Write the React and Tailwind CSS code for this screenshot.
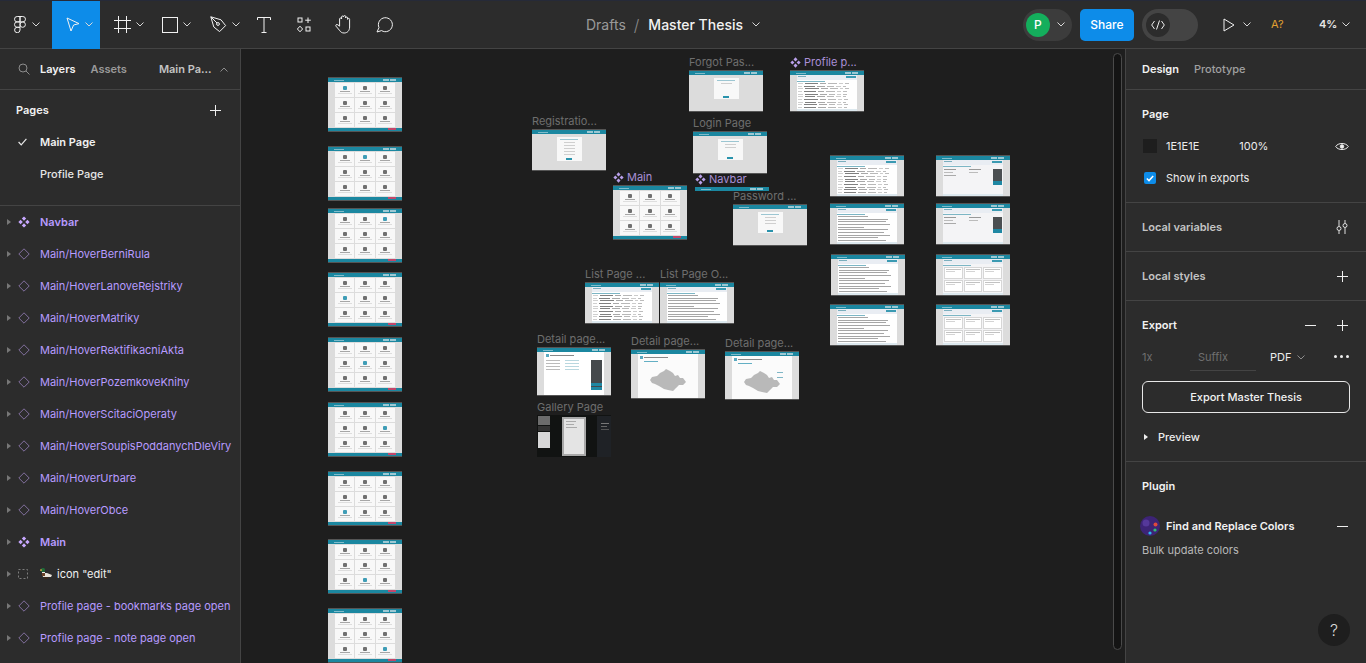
import React from 'react';

const font = { fontFamily: 'Inter, "Noto Sans", sans-serif' };

function Chevron({ className = '', color = '#d8d8d8' }) {
  return (
    <svg width="8" height="5" viewBox="0 0 8 5" className={className} fill="none">
      <path d="M0.5 0.5 L4 4 L7.5 0.5" stroke={color} strokeWidth="1" />
    </svg>
  );
}

function Plus({ size = 11 }) {
  return (
    <svg width={size} height={size} viewBox="0 0 11 11" fill="none">
      <path d="M5.5 0 V11 M0 5.5 H11" stroke="#efefef" strokeWidth="1" />
    </svg>
  );
}

function Minus() {
  return (
    <svg width="11" height="1" viewBox="0 0 11 1">
      <rect width="11" height="1" fill="#efefef" />
    </svg>
  );
}

function FigmaLogo() {
  return (
    <svg width="12" height="17" viewBox="0 0 12 17" fill="none" stroke="#f0f0f0" strokeWidth="1">
      <path d="M6 0.5 H3.2 a2.7 2.7 0 0 0 0 5.4 H6 Z" />
      <path d="M6 0.5 H8.8 a2.7 2.7 0 0 1 0 5.4 H6 Z" />
      <path d="M6 5.9 H3.2 a2.7 2.7 0 0 0 0 5.4 H6 Z" />
      <circle cx="8.7" cy="8.6" r="2.7" />
      <path d="M6 11.3 H3.2 a2.7 2.7 0 1 0 2.8 2.7 Z" />
    </svg>
  );
}

function ToolIcon({ kind }) {
  const s = { fill: 'none', stroke: '#f2f2f2', strokeWidth: 1 };
  if (kind === 'move')
    return (
      <svg width="14" height="15" viewBox="0 0 14 15" {...s}>
        <path d="M1 1 L13 6.6 L7.6 8 L5 14 Z" />
      </svg>
    );
  if (kind === 'frame')
    return (
      <svg width="17" height="17" viewBox="0 0 17 17" {...s}>
        <path d="M4.5 0 V17 M12.5 0 V17 M0 4.5 H17 M0 12.5 H17" />
      </svg>
    );
  if (kind === 'rect')
    return (
      <svg width="16" height="16" viewBox="0 0 16 16" {...s}>
        <rect x="0.5" y="0.5" width="15" height="15" />
      </svg>
    );
  if (kind === 'pen')
    return (
      <svg width="17" height="17" viewBox="0 0 17 17" {...s}>
        <path d="M0.8 0.8 L11 3.8 L15.6 9.6 L9.6 15.6 L3.8 11 Z" />
        <path d="M0.8 0.8 L7 7" />
        <circle cx="8" cy="8" r="1.4" />
      </svg>
    );
  if (kind === 'text')
    return (
      <svg width="14" height="16" viewBox="0 0 14 16" {...s}>
        <path d="M0.5 3 V0.5 H13.5 V3 M7 0.5 V15.5 M4.5 15.5 H9.5" />
      </svg>
    );
  if (kind === 'components')
    return (
      <svg width="15" height="16" viewBox="0 0 15 16" {...s}>
        <rect x="1" y="1" width="4" height="4" />
        <path d="M11 0.5 V6 M8.2 3.2 H13.8" />
        <path d="M3 9.2 L5.6 12 L3 14.8 L0.4 12 Z" />
        <rect x="9" y="10" width="4" height="4" />
      </svg>
    );
  if (kind === 'hand')
    return (
      <svg width="18" height="19" viewBox="0 0 18 19" {...s}>
        <path d="M4.6 11.2 V4 a1 1 0 0 1 2 0 V2 a1 1 0 0 1 2 0 V1.6 a1 1 0 0 1 2 0 V3 a1 1 0 0 1 2 0 V4.4 a1 1 0 0 1 2 0 V12 c0 3.6-2.2 6-5.4 6 c-2.4 0-3.6-1-4.8-2.8 L1 11.2 c-0.8-1.2 0.8-2.4 1.8-1.4 Z" />
      </svg>
    );
  return (
    <svg width="17" height="17" viewBox="0 0 17 17" {...s}>
      <path d="M1 16 L3 11.6 A7 7 0 1 1 5.6 14.6 Z" />
    </svg>
  );
}

function Tool({ kind, w = 48, chevron = true, active = false }) {
  return (
    <div
      className={`flex items-center h-[48px] shrink-0 gap-[5px] ${chevron ? 'justify-start pl-[14px]' : 'justify-center'} ${active ? 'bg-[#0d8ce9]' : ''}`}
      style={{ width: w }}
    >
      <ToolIcon kind={kind} />
      {chevron && <Chevron />}
    </div>
  );
}

function Toolbar() {
  return (
    <div className="flex items-center h-[48px] bg-[#2c2c2c] border-b border-[#444] text-[#f0f0f0] relative">
      <div className="flex items-center w-[52px] gap-[6px] pl-[14px]">
        <FigmaLogo />
        <Chevron />
      </div>
      <Tool kind="move" active />
      <Tool kind="frame" />
      <Tool kind="rect" />
      <Tool kind="pen" />
      <Tool kind="text" w={40} chevron={false} />
      <Tool kind="components" w={40} chevron={false} />
      <Tool kind="hand" w={40} chevron={false} />
      <Tool kind="comment" w={40} chevron={false} />

      <div className="flex items-center ml-[182px] text-[14px]">
        <span className="text-[#9a9a9a]">Drafts</span>
        <span className="text-[#8a8a8a] ml-[8px] mr-[9px] text-[16px] font-light">/</span>
        <span className="text-[#f2f2f2] font-medium">Master Thesis</span>
        <Chevron className="ml-[9px]" />
      </div>

      <div className="flex items-center ml-auto h-full">
        <div className="flex items-center w-[49px] h-[32px] rounded-full bg-[#3c3c3c] pl-[3px] gap-[7px]">
          <div className="w-[24px] h-[24px] rounded-full bg-[#14ae5c] flex items-center justify-center text-[12px] font-medium text-white">P</div>
          <Chevron />
        </div>
        <div className="ml-[8px] w-[54px] h-[32px] rounded-[5px] bg-[#0d8ce9] flex items-center justify-center text-[12px] font-medium text-white">Share</div>
        <div className="ml-[8px] w-[56px] h-[32px] rounded-full bg-[#444] flex items-center pl-[4px]">
          <div className="w-[24px] h-[24px] rounded-full bg-[#2c2c2c] flex items-center justify-center">
            <svg width="14" height="10" viewBox="0 0 14 10" fill="none" stroke="#efefef" strokeWidth="1">
              <path d="M3.5 1 L0.7 5 L3.5 9 M10.5 1 L13.3 5 L10.5 9 M8.5 0.5 L5.5 9.5" />
            </svg>
          </div>
        </div>
        <div className="ml-[25px] flex items-center gap-[8px] w-[26px]">
          <svg width="12" height="14" viewBox="0 0 12 14" fill="none" stroke="#f0f0f0" strokeWidth="1" className="shrink-0">
            <path d="M1 1 L11 7 L1 13 Z" />
          </svg>
          <Chevron className="shrink-0" />
        </div>
        <span className="ml-[22px] text-[11px] text-[#e0a030] tracking-wide">A?</span>
        <div className="flex items-center w-[30px] ml-[35px] gap-[5px] mr-[17px]">
          <span className="text-[11px] font-semibold text-[#e6e6e6]">4%</span>
          <Chevron className="shrink-0" />
        </div>
      </div>
    </div>
  );
}

function Diamond() {
  return (
    <svg width="12" height="12" viewBox="0 0 12 12" fill="none" stroke="#82709e" strokeWidth="1">
      <path d="M6 0.8 L11.2 6 L6 11.2 L0.8 6 Z" />
    </svg>
  );
}

function ComponentIcon({ color = '#c8a8ff', size = 12 }) {
  return (
    <svg width={size} height={size} viewBox="0 0 12 12" fill={color}>
      <path d="M6 0.4 L8.2 2.6 L6 4.8 L3.8 2.6 Z" />
      <path d="M6 7.2 L8.2 9.4 L6 11.6 L3.8 9.4 Z" />
      <path d="M2.6 3.8 L4.8 6 L2.6 8.2 L0.4 6 Z" />
      <path d="M9.4 3.8 L11.6 6 L9.4 8.2 L7.2 6 Z" />
    </svg>
  );
}

function DashedFrame() {
  return (
    <svg width="10" height="10" viewBox="0 0 10 10" fill="none">
      <rect x="0.5" y="0.5" width="9" height="9" stroke="#7d7d7d" strokeDasharray="2 2" />
    </svg>
  );
}

function Duck() {
  return (
    <svg width="13" height="12" viewBox="0 0 13 12" className="shrink-0">
      <rect x="1" y="0" width="4" height="4" rx="1.5" fill="#1f6b3a" />
      <rect x="0" y="1.5" width="2" height="1.2" fill="#d9b23c" />
      <rect x="2" y="4" width="3" height="1" fill="#eee" />
      <path d="M2 5 H7 L12 7 L11 9 H3 Z" fill="#e9e4da" />
      <rect x="2" y="5" width="3" height="3" fill="#6a4126" />
      <rect x="4" y="9" width="4" height="2" fill="#3a2a1c" />
    </svg>
  );
}

const layers = [
  ['comp', 'Navbar'],
  ['var', 'Main/HoverBerniRula'],
  ['var', 'Main/HoverLanoveRejstriky'],
  ['var', 'Main/HoverMatriky'],
  ['var', 'Main/HoverRektifikacniAkta'],
  ['var', 'Main/HoverPozemkoveKnihy'],
  ['var', 'Main/HoverScitaciOperaty'],
  ['var', 'Main/HoverSoupisPoddanychDleViry'],
  ['var', 'Main/HoverUrbare'],
  ['var', 'Main/HoverObce'],
  ['comp', 'Main'],
  ['frame', 'icon "edit"'],
  ['var', 'Profile page - bookmarks page open'],
  ['var', 'Profile page - note page open'],
];

function LayerRow({ type, name }) {
  return (
    <div className="flex items-center h-[32px] shrink-0 whitespace-nowrap">
      <div className="w-[18px] flex justify-end pr-[7px]">
        <span className="w-0 h-0 border-y-[3.5px] border-y-transparent border-l-[4px] border-l-[#777]" />
      </div>
      <div className="w-[22px] flex justify-start">
        {type === 'comp' && <ComponentIcon />}
        {type === 'var' && <Diamond />}
        {type === 'frame' && <DashedFrame />}
      </div>
      {type === 'frame' ? (
        <span className="flex items-center gap-[4px] text-[11px] text-[#f0f0f0]"><Duck />{name}</span>
      ) : (
        <span className={`text-[11px] text-[#b79bff] ${type === 'comp' ? 'font-semibold' : ''}`}>{name}</span>
      )}
    </div>
  );
}

function LeftPanel() {
  return (
    <aside className="w-[241px] shrink-0 bg-[#2c2c2c] border-r border-[#444] flex flex-col overflow-hidden">
      <div className="flex items-center h-[41px] shrink-0 border-b border-[#444] text-[11px] font-semibold">
        <svg width="12" height="12" viewBox="0 0 12 12" fill="none" stroke="#8c8c8c" strokeWidth="1" className="ml-[18px]">
          <circle cx="5" cy="5" r="4" />
          <path d="M8 8 L11.5 11.5" />
        </svg>
        <span className="ml-[10px] text-[#f2f2f2]">Layers</span>
        <span className="ml-[15px] text-[#9a9a9a]">Assets</span>
        <span className="ml-[32px] text-[#c4c4c4]">Main Pa...</span>
        <svg width="8" height="5" viewBox="0 0 8 5" fill="none" stroke="#8c8c8c" className="ml-[8px]">
          <path d="M0.5 4.5 L4 1 L7.5 4.5" />
        </svg>
      </div>

      <div className="border-b border-[#444] pt-[4px] pb-[15px] shrink-0">
        <div className="flex items-center justify-between h-[32px] pl-[16px] pr-[19px]">
          <span className="text-[11px] font-semibold text-[#f2f2f2]">Pages</span>
          <Plus />
        </div>
        <div className="flex items-center h-[32px] text-[11px] font-semibold text-[#f2f2f2]">
          <svg width="9" height="8" viewBox="0 0 9 8" fill="none" stroke="#e8e8e8" strokeWidth="1.2" className="ml-[18px] mr-[13px]">
            <path d="M0.6 4 L3.2 6.8 L8.4 0.8" />
          </svg>
          Main Page
        </div>
        <div className="flex items-center h-[32px] pl-[40px] text-[11px] font-medium text-[#e6e6e6]">Profile Page</div>
      </div>

      <div className="flex flex-col">
        {layers.map(([type, name]) => (
          <LayerRow key={name} type={type} name={name} />
        ))}
      </div>
    </aside>
  );
}

function Section({ children, className = '' }) {
  return <div className={`border-b border-[#444] px-[16px] shrink-0 ${className}`}>{children}</div>;
}

function TitleRow({ title, children, muted }) {
  return (
    <div className="flex items-center justify-between h-[48px] text-[11px] font-semibold">
      <span className={muted ? 'text-[#c4c4c4]' : 'text-[#f2f2f2]'}>{title}</span>
      {children}
    </div>
  );
}

function RightPanel() {
  return (
    <aside className="w-[241px] shrink-0 bg-[#2c2c2c] border-l border-[#444] flex flex-col overflow-hidden relative">
      <Section className="h-[41px] flex items-center gap-[15px] text-[11px] font-semibold">
        <span className="text-[#f2f2f2]">Design</span>
        <span className="text-[#a0a0a0] font-medium">Prototype</span>
      </Section>

      <Section className="h-[113px]">
        <div className="flex items-center h-[48px] text-[11px] font-semibold text-[#f2f2f2]">Page</div>
        <div className="flex items-center h-[16px] text-[11px] text-[#ececec]">
          <span className="w-[14px] h-[14px] bg-[#1e1e1e] ml-[1px]" />
          <span className="ml-[9px]">1E1E1E</span>
          <span className="ml-[40px]">100%</span>
          <svg width="14" height="9" viewBox="0 0 14 9" fill="none" stroke="#efefef" className="ml-auto mr-[1px]">
            <path d="M0.7 4.5 C3 0.5 11 0.5 13.3 4.5 C11 8.5 3 8.5 0.7 4.5 Z" />
            <circle cx="7" cy="4.5" r="1.7" fill="#efefef" />
          </svg>
        </div>
        <div className="flex items-center h-[16px] mt-[16px] text-[11px] text-[#ececec]">
          <span className="w-[12px] h-[12px] rounded-[2px] bg-[#0d8ce9] ml-[2px] flex items-center justify-center">
            <svg width="8" height="7" viewBox="0 0 8 7" fill="none" stroke="#fff" strokeWidth="1.5">
              <path d="M0.8 3.5 L3 5.6 L7.2 1" />
            </svg>
          </span>
          <span className="ml-[10px]">Show in exports</span>
        </div>
      </Section>

      <Section className="h-[49px]">
        <TitleRow title="Local variables" muted>
          <svg width="14" height="14" viewBox="0 0 14 14" fill="none" stroke="#e0e0e0" className="mr-[1px]">
            <path d="M4 0 V6 M4 11 V14 M10 0 V3 M10 8 V14" />
            <circle cx="4" cy="8.5" r="2" />
            <circle cx="10" cy="5.5" r="2" />
          </svg>
        </TitleRow>
      </Section>

      <Section className="h-[49px]">
        <TitleRow title="Local styles" muted>
          <span className="mr-[2px] flex"><Plus /></span>
        </TitleRow>
      </Section>

      <Section className="h-[161px]">
        <TitleRow title="Export">
          <span className="flex items-center gap-[21px] mr-[2px]"><Minus /><Plus /></span>
        </TitleRow>
        <div className="flex items-start h-[16px] text-[11px] leading-[16px]">
          <span className="text-[#6f6f6f] w-[48px]">1x</span>
          <span className="text-[#6f6f6f] w-[66px] pl-[8px] h-[22px] border-b border-[#444]">Suffix</span>
          <span className="ml-[14px] text-[#ececec]">PDF</span>
          <Chevron className="ml-[6px] mt-[6px]" color="#8c8c8c" />
          <span className="ml-auto mr-[1px] mt-[6px] flex gap-[3px]">
            <span className="w-[3px] h-[3px] rounded-full bg-[#efefef]" />
            <span className="w-[3px] h-[3px] rounded-full bg-[#efefef]" />
            <span className="w-[3px] h-[3px] rounded-full bg-[#efefef]" />
          </span>
        </div>
        <div className="h-[32px] mt-[16px] border border-[#e8e8e8] rounded-[6px] flex items-center justify-center text-[11px] font-medium text-[#f2f2f2]">
          Export Master Thesis
        </div>
        <div className="flex items-center h-[16px] mt-[16px] text-[11px] font-medium text-[#ececec]">
          <span className="w-0 h-0 border-y-[3px] border-y-transparent border-l-[4px] border-l-[#efefef] ml-[2px]" />
          <span className="ml-[10px]">Preview</span>
        </div>
      </Section>

      <div className="px-[16px]">
        <div className="flex items-center h-[48px] text-[11px] font-semibold text-[#f2f2f2]">Plugin</div>
        <div className="flex items-center h-[32px] text-[11px] font-semibold text-[#f2f2f2]">
          <svg width="20" height="20" viewBox="0 0 20 20" className="-ml-[2px] mr-[6px]">
            <circle cx="10" cy="10" r="10" fill="#3d2476" />
            <circle cx="6" cy="7" r="3.5" fill="#55389a" />
            <circle cx="15.5" cy="8.5" r="2" fill="#e0483c" />
            <circle cx="15" cy="14" r="1.6" fill="#2fbf71" />
            <circle cx="10" cy="17" r="1.6" fill="#2ab7f0" />
          </svg>
          Find and Replace Colors
          <span className="ml-auto mr-[2px] flex"><Minus /></span>
        </div>
        <div className="text-[11px] text-[#b8b8b8] h-[16px] mt-[-1px] pt-[1px] leading-[16px]">Bulk update colors</div>
      </div>

      <div className="absolute right-[16px] bottom-[17px] w-[32px] h-[32px] rounded-full bg-[#1e1e1e] flex items-center justify-center text-[16px] font-light text-[#d8d8d8]">?</div>
    </aside>
  );
}

const TEAL = 'bg-[#1b87a0]';

function Header({ lastWide }) {
  return (
    <div className={`h-[4px] ${TEAL} shrink-0 flex items-center justify-between px-[6px]`}>
      <span className="w-[10px] h-[1px] bg-[#7fbccb]" />
      <span className="flex gap-[1px]">
        <span className="w-[6px] h-[2px] bg-[#9cc8d3]" />
        <span className={`${lastWide ? 'w-[8px]' : 'w-[6px]'} h-[2px] bg-[#9cc8d3]`} />
      </span>
    </div>
  );
}

function MainThumb({ hi = -1 }) {
  const cells = [0, 1, 2, 3, 4, 5, 6, 7, 8];
  return (
    <>
      <Header />
      <div className="flex-1 grid grid-cols-3 grid-rows-3 gap-[1px] px-[7px] pt-[1px] pb-[1px] bg-[#dcdcdc]">
        {cells.map((i) => (
          <div key={i} className="bg-[#f8f8f8] flex flex-col items-center justify-center gap-[1px]">
            <span className={`w-[4px] h-[4px] rounded-[1px] ${i === hi ? 'bg-[#3f9db6]' : 'bg-[#707070]'}`} />
            <span className="w-[10px] h-[1px] bg-[#a6a6a6]" />
            <span className="w-[14px] h-[1px] bg-[#dedede]" />
          </div>
        ))}
      </div>
      <div className={`h-[3px] ${TEAL} shrink-0 flex justify-end pr-[6px]`}>
        <span className="w-[8px] h-[2px] bg-[#c2476b]" />
      </div>
    </>
  );
}

function FormThumb({ lines = 2, tall = 13 }) {
  return (
    <>
      <Header />
      <div className="flex-1 bg-[#dcdcdc] flex justify-center pt-[3px]">
        <div className="w-[25px] bg-[#f8f8f8] flex flex-col items-center pt-[2px] gap-[2px]" style={{ height: tall + 8 }}>
          <span className="w-[18px] h-[1px] bg-[#9cc6d2]" />
          {Array.from({ length: lines }).map((_, i) => (
            <span key={i} className="w-[11px] h-[1px] bg-[#cfcfcf]" />
          ))}
          <span className="w-[6px] h-[2px] bg-[#2a93ac] mt-auto mb-[1px]" />
        </div>
      </div>
    </>
  );
}

function PageTop({ tab = true }) {
  return (
    <div className="shrink-0">
      <div className="h-[5px] bg-[#e9edf3] flex items-start justify-between px-[1px] pt-[1px]">
        <span className="w-[8px] h-[1px] bg-[#7aaebd]" />
        <span className="w-[10px] h-[2px] bg-[#3b9ab2]" />
      </div>
      {tab && <div className="h-[1px] bg-[#7cb6c5] w-[28px] mt-[1px]" />}
    </div>
  );
}

function TableThumb() {
  const rows = [
    [5, 13, 6, 9, 4, 4], [4, 11, 8, 7, 5, 3], [5, 14, 7, 8, 3, 4], [4, 12, 6, 9, 4, 4], [5, 13, 7, 6, 4, 4],
    [5, 10, 8, 7, 5, 3], [4, 14, 6, 8, 4, 4], [5, 11, 7, 9, 3, 3], [4, 13, 8, 6, 5, 4], [4, 12, 8, 8, 4, 3],
  ];
  const tones = ['bg-[#d0d0d0]', 'bg-[#808080]', 'bg-[#a8a8a8]', 'bg-[#b8b8b8]', 'bg-[#cccccc]', 'bg-[#bcbcbc]'];
  return (
    <>
      <Header />
      <div className="flex-1 bg-[#dcdcdc] px-[7px] flex overflow-hidden">
        <div className="flex-1 bg-white flex flex-col overflow-hidden">
          <PageTop />
          <div className="flex-1 flex flex-col justify-between py-[1px]">
            {rows.map((row, r) => (
              <div key={r} className="flex gap-[2px] px-[1px]">
                {row.map((w, i) => (
                  <span key={i} className={`h-[1px] shrink-0 ${tones[i]}`} style={{ width: w }} />
                ))}
              </div>
            ))}
          </div>
          <div className="h-[2px] bg-[#dce8ee] shrink-0" />
        </div>
      </div>
    </>
  );
}

function TextThumb() {
  const rows = [30, 50, 48, 52, 26, 50, 46, 52, 40, 48];
  return (
    <>
      <Header />
      <div className="flex-1 bg-[#dcdcdc] px-[7px] flex overflow-hidden">
        <div className="flex-1 bg-white flex flex-col overflow-hidden">
          <PageTop />
          <div className="flex-1 flex flex-col justify-between pt-[1px] pb-[1px] px-[1px]">
            {rows.map((w, i) => (
              <span key={i} className="h-[1px] bg-[#a6a6a6]" style={{ width: w }} />
            ))}
          </div>
          <div className="h-[2px] bg-[#dce8ee] shrink-0" />
        </div>
      </div>
    </>
  );
}

function ProductThumb() {
  return (
    <>
      <Header />
      <div className="flex-1 bg-[#dcdcdc] px-[7px] flex overflow-hidden">
        <div className="flex-1 bg-[#f4f4f6] flex flex-col overflow-hidden">
          <PageTop />
          <div className="flex-1 flex justify-between px-[1px] pt-[2px]">
            <div className="flex flex-col gap-[2px]">
              <span className="w-[12px] h-[1px] bg-[#999]" />
              <span className="w-[9px] h-[1px] bg-[#bbb]" />
              <span className="w-[12px] h-[1px] bg-[#aaa]" />
            </div>
            <div className="flex flex-col gap-[2px]">
              <span className="w-[12px] h-[1px] bg-[#999]" />
              <span className="w-[9px] h-[1px] bg-[#bbb]" />
            </div>
            <div className="w-[9px] h-[16px] bg-[#4b4f52] flex flex-col justify-end">
              <span className="h-[4px] bg-[#1f87a3]" />
            </div>
          </div>
          <div className="h-[2px] bg-[#dce8ee] shrink-0" />
        </div>
      </div>
    </>
  );
}

function CardsThumb() {
  return (
    <>
      <Header />
      <div className="flex-1 bg-[#dcdcdc] px-[7px] flex overflow-hidden">
        <div className="flex-1 bg-[#f4f4f6] flex flex-col overflow-hidden">
          <PageTop />
          <div className="flex-1 grid grid-cols-3 gap-[1px] p-[1px]">
            {[0, 1, 2, 3, 4, 5].map((i) => (
              <div key={i} className="bg-white border border-[#d6d6d6] flex flex-col gap-[1px] p-[1px]">
                <span className="h-[1px] bg-[#c2c2c2]" />
                <span className="h-[1px] w-[9px] bg-[#d4d4d4]" />
              </div>
            ))}
          </div>
          <div className="h-[2px] bg-[#dce8ee] shrink-0" />
        </div>
      </div>
    </>
  );
}

function DetailThumb() {
  return (
    <>
      <Header />
      <div className="flex-1 bg-[#dcdcdc] px-[7px] flex overflow-hidden">
        <div className="flex-1 bg-white flex flex-col px-[2px] pt-[2px] overflow-hidden">
          <div className="flex items-center gap-[1px] shrink-0">
            <span className="w-[3px] h-[3px] bg-[#5aa9c0]" />
            <span className="w-[24px] h-[1px] bg-[#888]" />
          </div>
          <div className="flex-1 flex justify-between pt-[3px]">
            <div className="grid grid-cols-2 gap-x-[5px] gap-y-[2px] content-start">
              {[0, 1, 2, 3, 4, 5, 6, 7].map((i) => (
                <span key={i} className={`w-[14px] h-[1px] ${i % 2 ? 'bg-[#b9d7df]' : 'bg-[#bbb]'}`} />
              ))}
            </div>
            <div className="w-[11px] h-[30px] bg-[#45494c] flex flex-col justify-end gap-[1px]">
              <span className="h-[3px] bg-[#1f87a3]" />
              <span className="h-[3px] bg-[#1f87a3]" />
            </div>
          </div>
        </div>
      </div>
    </>
  );
}

function MapThumb({ extra }) {
  return (
    <>
      <Header />
      <div className="flex-1 bg-[#dcdcdc] px-[7px] flex overflow-hidden">
        <div className="flex-1 bg-[#fbfbfb] flex flex-col px-[2px] pt-[2px] overflow-hidden">
          <div className="flex items-center gap-[1px] shrink-0">
            <span className="w-[3px] h-[3px] bg-[#5aa9c0]" />
            <span className="w-[24px] h-[1px] bg-[#888]" />
          </div>
          <span className="w-[14px] h-[1px] bg-[#63afc4] mt-[2px] ml-[4px] shrink-0" />
          <div className="flex-1 flex items-center justify-center relative">
            <svg width="38" height="24" viewBox="0 0 38 24">
              <path d="M1 12 L3 9 L8 8 L11 5 L15 3 L17 1 L21 3 L24 5 L26 8 L29 7 L31 10 L34 10 L37 14 L34 17 L30 17 L27 20 L24 23 L19 22 L15 21 L10 18 L6 16 L3 15 Z" fill="#b9b9b9" />
            </svg>
            {extra && <span className="absolute right-[7px] top-[8px] w-[6px] h-[6px] border-t border-b border-[#7fb6c6]" />}
          </div>
        </div>
      </div>
    </>
  );
}

function GalleryThumb() {
  return (
    <div className="flex-1 bg-[#111312] flex overflow-hidden pt-[1px]">
      <div className="w-[14px] flex flex-col gap-[1px] pl-[1px] pr-[1px]">
        <span className="h-[9px] bg-[#6c6c6c]" />
        <span className="h-[5px] bg-[#333]" />
        <span className="h-[16px] bg-[#d8d8d8]" />
      </div>
      <div className="flex-1 flex justify-center py-[1px]">
        <div className="w-[24px] bg-[#a8a8a8] p-[2px]">
          <div className="w-full h-full bg-[#e4e4e4] flex flex-col gap-[2px] p-[2px]">
            <span className="h-[1px] w-[10px] bg-[#aaa]" />
            <span className="h-[1px] w-[8px] bg-[#aaa]" />
            <span className="h-[1px] w-[11px] bg-[#aaa]" />
          </div>
        </div>
      </div>
      <div className="w-[14px] bg-[#1f2226] flex flex-col gap-[2px] pt-[7px] pl-[4px]">
        <span className="w-[8px] h-[1px] bg-[#777]" />
        <span className="w-[6px] h-[1px] bg-[#666]" />
        <span className="w-[8px] h-[1px] bg-[#555]" />
      </div>
    </div>
  );
}

function Frame({ x, y, h, label, comp, children, dark }) {
  return (
    <div className="absolute w-[74px]" style={{ left: x - 241, top: y - 49 }}>
      {label && (
        <div className={`absolute left-0 -top-[15px] h-[15px] leading-[15px] whitespace-nowrap text-[11px] flex items-center gap-[3px] ${comp ? 'text-[#a98fd6]' : 'text-[#6e6e6e]'}`}>
          {comp && <ComponentIcon color="#b9a0ea" size={11} />}
          {label}
        </div>
      )}
      <div
        className={`flex flex-col overflow-hidden blur-[0.4px] ${dark ? '' : 'border-t border-b border-[#555]'}`}
        style={{ height: h }}
      >
        {children}
      </div>
    </div>
  );
}

const stack = [
  [77, 0], [146, 1], [208, 2], [272, 3], [337, 4], [402, 5], [471, 6], [539, 7], [608, 8],
];

function Canvas() {
  return (
    <main className="flex-1 relative bg-[#1e1e1e] overflow-hidden">
      {stack.map(([y, hi]) => (
        <Frame key={y} x={328} y={y} h={55}><MainThumb hi={hi} /></Frame>
      ))}

      <Frame x={689} y={70} h={42} label="Forgot Pas..."><FormThumb lines={1} /></Frame>
      <Frame x={790} y={70} h={42} label="Profile p..." comp><TableThumb /></Frame>
      <Frame x={532} y={129} h={42} label="Registratio..."><FormThumb lines={5} tall={16} /></Frame>
      <Frame x={693} y={131} h={43} label="Login Page"><FormThumb lines={2} /></Frame>
      <Frame x={613} y={185} h={55} label="Main" comp><MainThumb /></Frame>
      <Frame x={695} y={187} h={4} label="Navbar" comp dark><Header /></Frame>
      <Frame x={733} y={204} h={42} label="Password ..."><FormThumb lines={3} /></Frame>

      <Frame x={585} y={282} h={42} label="List Page ..."><TableThumb /></Frame>
      <Frame x={660} y={282} h={42} label="List Page O..."><TextThumb /></Frame>
      <Frame x={537} y={347} h={49} label="Detail page..."><DetailThumb /></Frame>
      <Frame x={631} y={349} h={50} label="Detail page..."><MapThumb /></Frame>
      <Frame x={725} y={351} h={49} label="Detail page..."><MapThumb extra /></Frame>
      <Frame x={537} y={415} h={42} label="Gallery Page" dark><GalleryThumb /></Frame>

      <Frame x={830} y={155} h={42}><TableThumb /></Frame>
      <Frame x={936} y={155} h={42}><ProductThumb /></Frame>
      <Frame x={830} y={203} h={42}><TextThumb /></Frame>
      <Frame x={936} y={203} h={42}><ProductThumb /></Frame>
      <Frame x={831} y={254} h={42}><TextThumb /></Frame>
      <Frame x={936} y={254} h={42}><CardsThumb /></Frame>
      <Frame x={830} y={304} h={42}><TextThumb /></Frame>
      <Frame x={936} y={304} h={42}><CardsThumb /></Frame>

      {/* canvas scrollbar */}
      <div className="absolute left-[872px] top-[4px] w-[9px] h-[597px] rounded-full border border-[#4a4a4a] bg-[#141414]" />
    </main>
  );
}

export default function App() {
  return (
    <div className="w-[1366px] h-[663px] flex flex-col overflow-hidden bg-[#2c2c2c]" style={font}>
      <div className="h-px bg-[#262a38] shrink-0" />
      <Toolbar />
      <div className="flex flex-1 min-h-0">
        <LeftPanel />
        <Canvas />
        <RightPanel />
      </div>
    </div>
  );
}
